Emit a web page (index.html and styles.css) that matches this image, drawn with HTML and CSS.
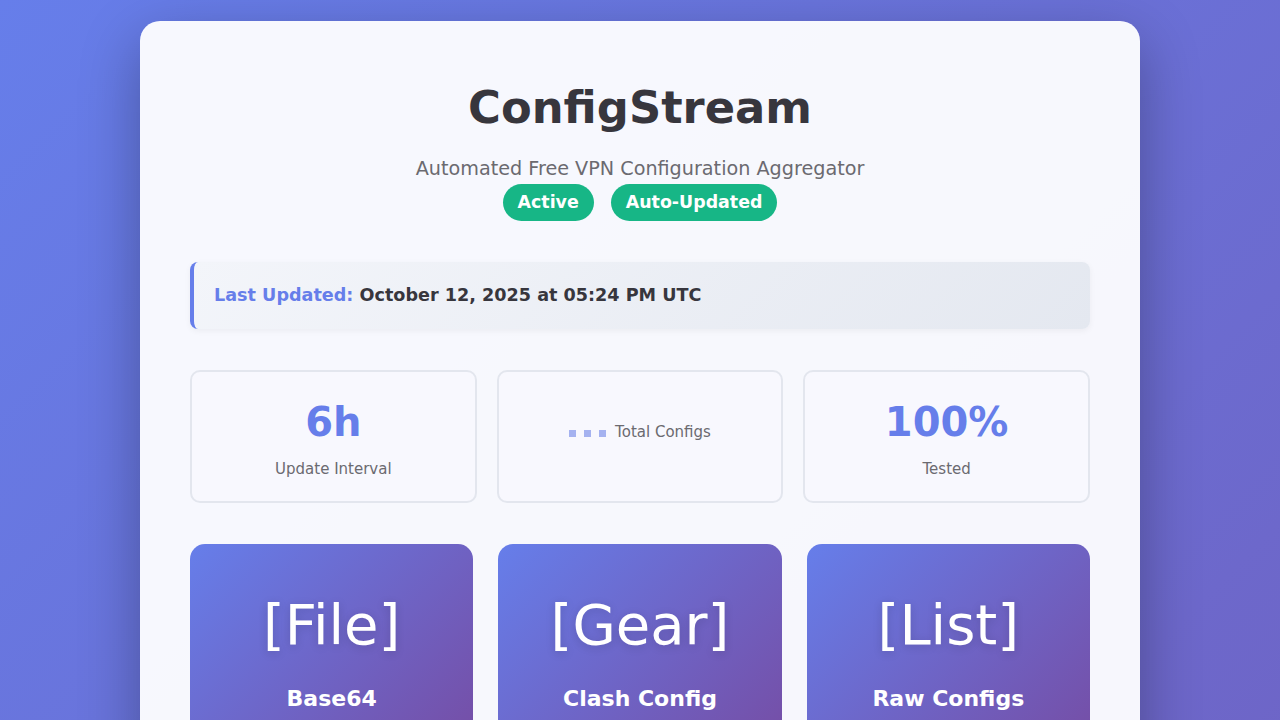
FILE: index.html
```html
<!DOCTYPE html>
<html lang="en">
<head>
<meta charset="utf-8">
<title>ConfigStream</title>
<link rel="stylesheet" href="styles.css">
</head>
<body>
<div class="container">
  <header class="header">
    <h1 class="title">ConfigStream</h1>
    <p class="subtitle">Automated Free VPN Configuration Aggregator</p>
    <div class="badges">
      <span class="badge">Active</span>
      <span class="badge">Auto-Updated</span>
    </div>
  </header>

  <div class="update-info">
    <span class="update-label">Last Updated:</span> <span class="update-value">October 12, 2025 at 05:24 PM UTC</span>
  </div>

  <div class="stats">
    <div class="stat-card">
      <div class="stat-number">6h</div>
      <div class="stat-label">Update Interval</div>
    </div>
    <div class="stat-card">
      <div class="stat-loading">
        <span class="dots"><span class="dot"></span><span class="dot"></span><span class="dot"></span></span>
        <span class="stat-label">Total Configs</span>
      </div>
    </div>
    <div class="stat-card">
      <div class="stat-number">100%</div>
      <div class="stat-label">Tested</div>
    </div>
  </div>

  <div class="downloads">
    <div class="dl-card">
      <div class="dl-icon">[File]</div>
      <div class="dl-title">Base64</div>
    </div>
    <div class="dl-card">
      <div class="dl-icon">[Gear]</div>
      <div class="dl-title">Clash Config</div>
    </div>
    <div class="dl-card">
      <div class="dl-icon">[List]</div>
      <div class="dl-title">Raw Configs</div>
    </div>
  </div>
</div>
</body>
</html>
```

FILE: styles.css
```css
* {
  box-sizing: border-box;
}

html {
  background: #6a6fd6;
}

body {
  margin: 0;
  padding: 21px 20px 20px;
  min-height: 2900px;
  font-family: "DejaVu Sans", sans-serif;
  background: linear-gradient(135deg, #667eea 0%, #764ba2 100%);
  color: #333;
}

.container {
  max-width: 1000px;
  margin: 0 auto;
  background: rgba(255, 255, 255, 0.95);
  border-radius: 20px;
  padding: 60px 50px 50px;
  box-shadow: 0 20px 60px rgba(0, 0, 0, 0.3);
}

.header {
  text-align: center;
  margin-bottom: 41px;
}

.title {
  margin: 0 0 24px;
  font-size: 44.8px;
  line-height: 53px;
  font-weight: 700;
  color: #37363d;
}

.subtitle {
  margin: 0;
  font-size: 19.2px;
  line-height: 22px;
  color: #6b6a70;
}

.badges {
  display: flex;
  justify-content: center;
  gap: 17px;
  margin-top: 4px;
}

.badge {
  display: inline-block;
  background: #17b686;
  color: #fff;
  font-weight: 700;
  font-size: 17.4px;
  line-height: 21px;
  padding: 8px 15px;
  border-radius: 20px;
}

.update-info {
  background: linear-gradient(135deg, #f3f5fa 0%, #e4e8f0 100%);
  border-left: 4px solid #667eea;
  border-radius: 8px;
  padding: 23px 20px;
  font-size: 17.6px;
  font-weight: 700;
  line-height: 21px;
  box-shadow: 0 2px 6px rgba(0, 0, 0, 0.05);
  margin-bottom: 41px;
}

.update-label {
  color: #667eea;
}

.update-value {
  color: #37363d;
}

.stats {
  display: grid;
  grid-template-columns: repeat(3, 1fr);
  gap: 20px;
  margin-bottom: 41px;
}

.stat-card {
  border: 2px solid #e3e6ee;
  border-radius: 10px;
  height: 133px;
  padding: 26px 10px 25px;
  display: flex;
  flex-direction: column;
  align-items: center;
  background: #f8f8fe;
}

.stat-number {
  font-size: 40px;
  font-weight: 700;
  color: #667eea;
  line-height: 48px;
  margin-bottom: 14px;
}

.stat-label {
  font-size: 15px;
  line-height: 18px;
  color: #6b6a70;
}

.stat-loading {
  display: flex;
  align-items: center;
  gap: 9px;
  margin-top: 25px;
}

.dots {
  display: flex;
  gap: 8px;
  margin-top: 3px;
}

.dot {
  width: 7px;
  height: 7px;
  background: #a5b2f0;
}

.downloads {
  display: grid;
  grid-template-columns: repeat(3, 1fr);
  gap: 25px;
}

.dl-card {
  background: linear-gradient(135deg, #667eea 0%, #764ba2 100%);
  border-radius: 15px;
  color: #fff;
  text-align: center;
  padding: 40px 20px 60px;
}

.dl-icon {
  font-size: 56px;
  line-height: 82px;
  text-shadow: 0 2px 10px rgba(0, 0, 0, 0.15);
  margin-bottom: 20px;
}

.dl-title {
  font-size: 22px;
  font-weight: 700;
}
```
